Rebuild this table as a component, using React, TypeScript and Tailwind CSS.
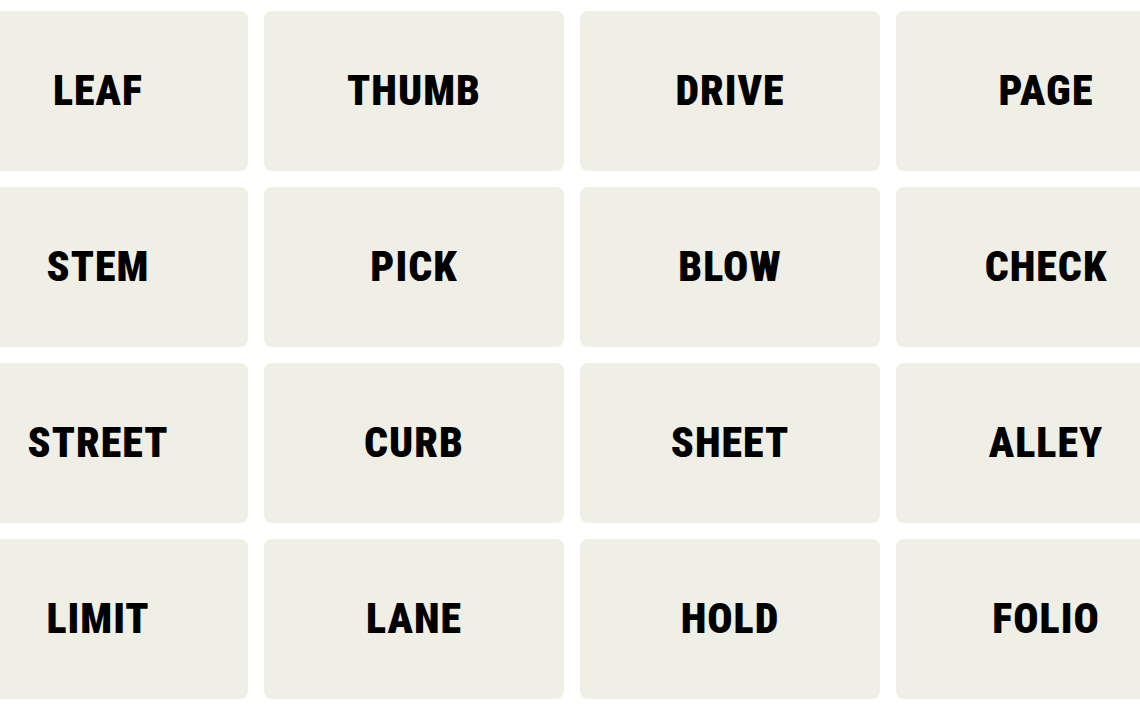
import React from "react";

const words = [
  "LEAF", "THUMB", "DRIVE", "PAGE",
  "STEM", "PICK", "BLOW", "CHECK",
  "STREET", "CURB", "SHEET", "ALLEY",
  "LIMIT", "LANE", "HOLD", "FOLIO",
];

export default function App() {
  return (
    <div className="w-[1140px] h-[709px] overflow-hidden bg-white">
      <div className="pt-[11px] -ml-[52px] grid grid-cols-[repeat(4,300px)] grid-rows-[repeat(4,160px)] gap-4 w-max">
        {words.map((w) => (
          <div
            key={w}
            className="flex items-center justify-center rounded-[8px] bg-[#efefe6] text-black font-['Roboto_Condensed','Roboto',sans-serif] font-stretch-semi-condensed font-black text-[42px] leading-none tracking-[1px] select-none"
          >
            {w}
          </div>
        ))}
      </div>
    </div>
  );
}
